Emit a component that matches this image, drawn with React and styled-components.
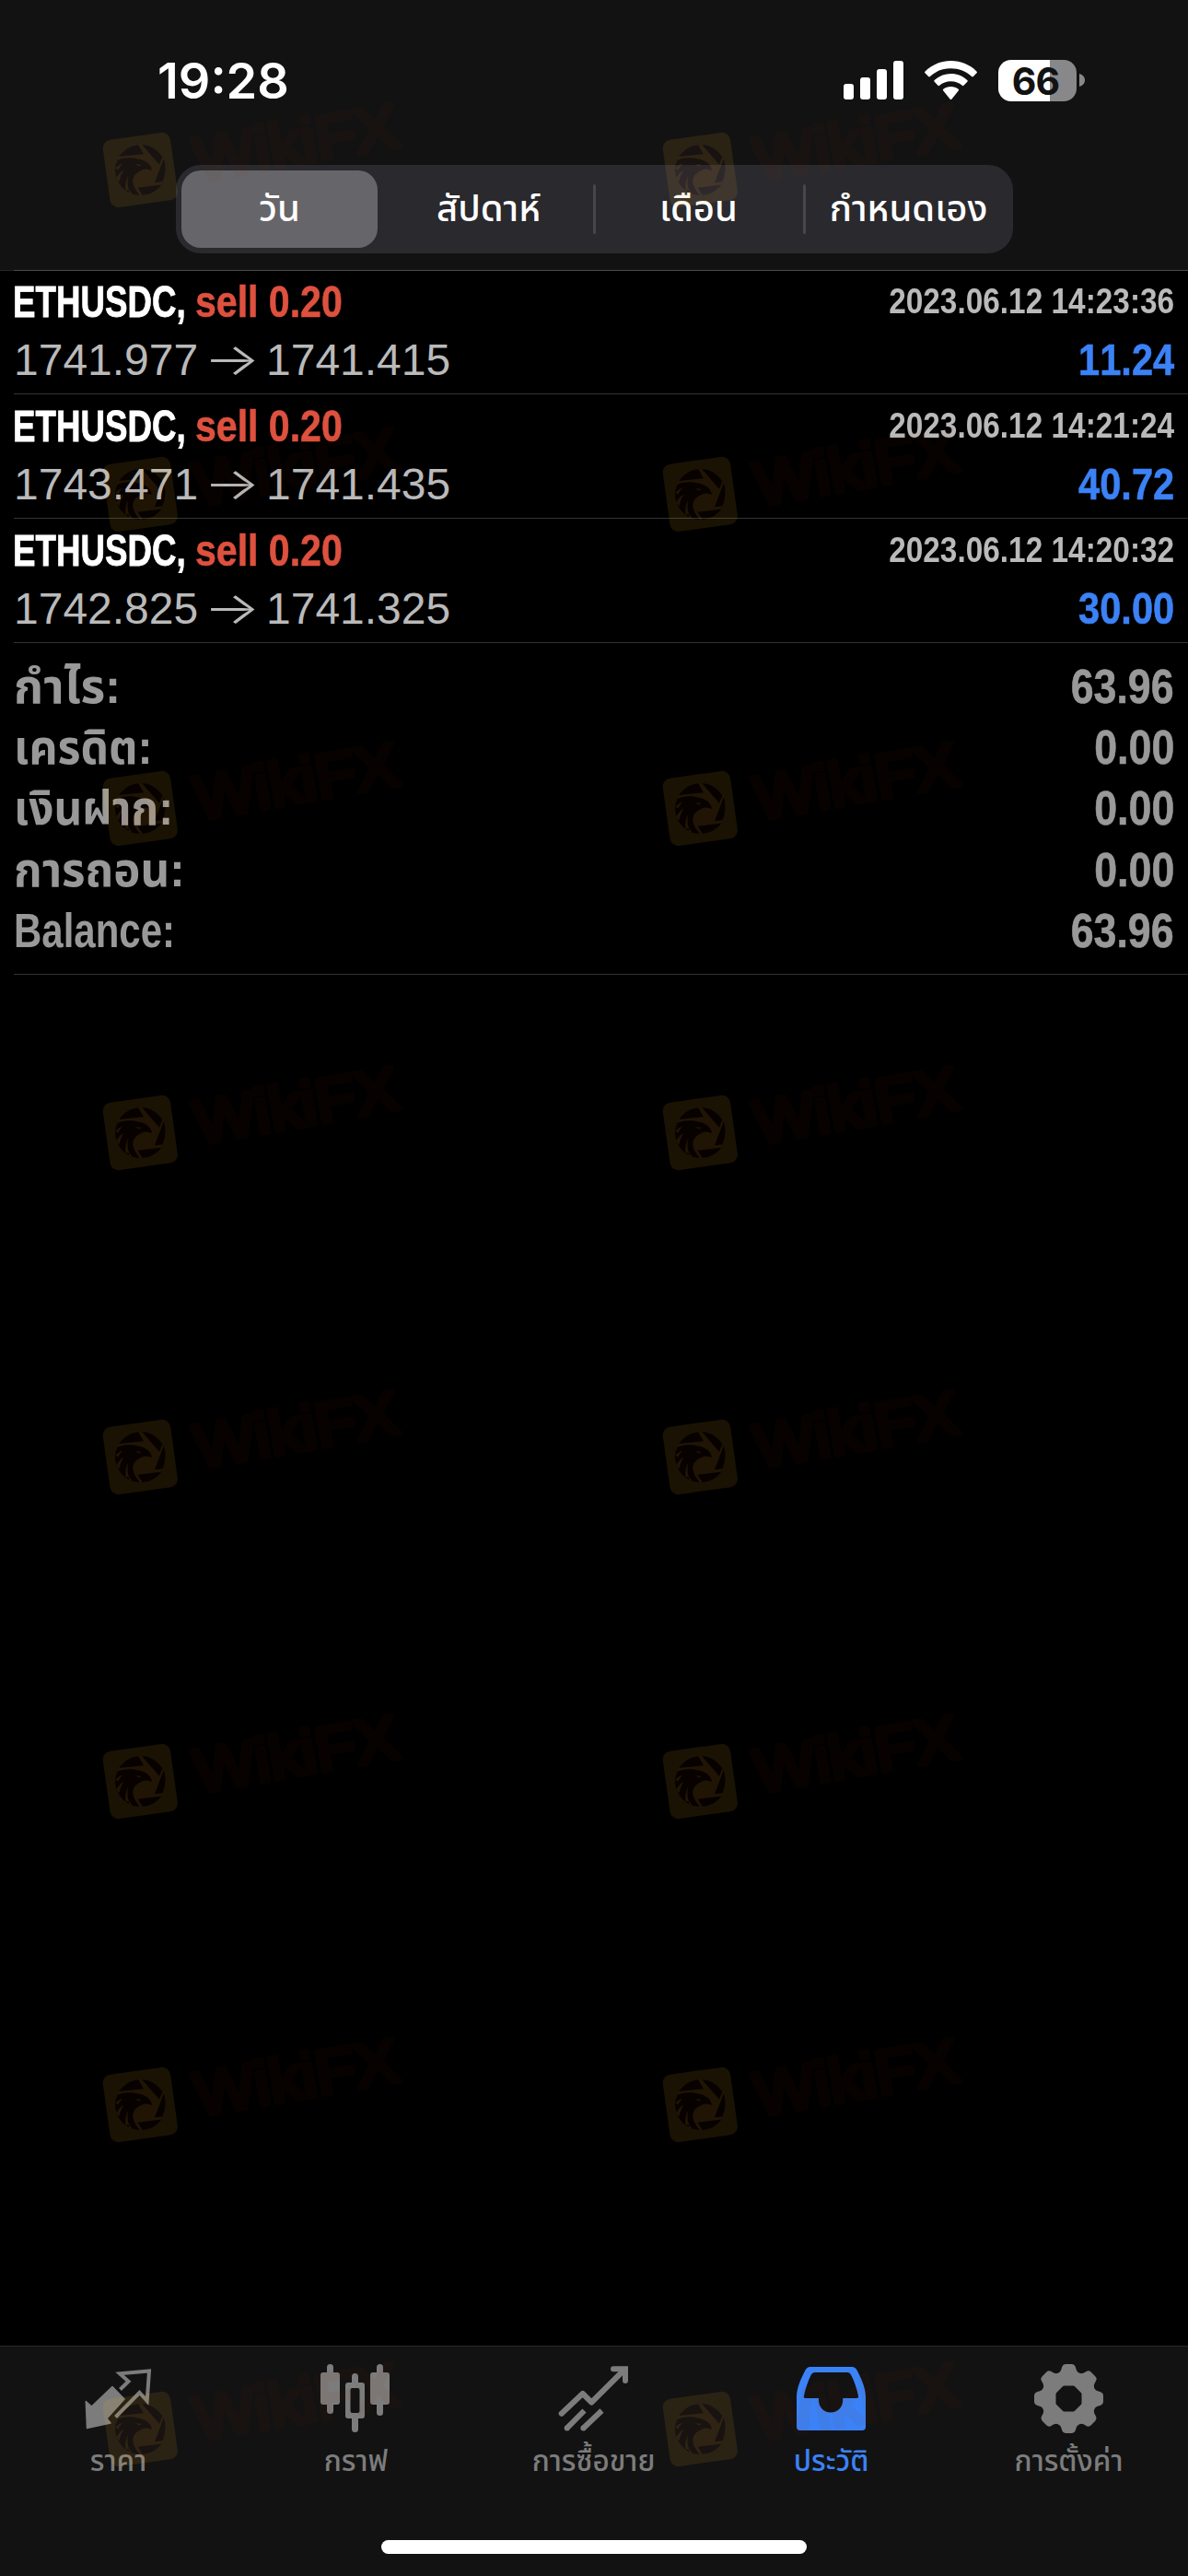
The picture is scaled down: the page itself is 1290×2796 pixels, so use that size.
import { useId } from "react";
import styled, { createGlobalStyle, css } from "styled-components";

const trades = [
  { id: 1, open: "1741.977", close: "1741.415", time: "2023.06.12 14:23:36", profit: "11.24" },
  { id: 2, open: "1743.471", close: "1741.435", time: "2023.06.12 14:21:24", profit: "40.72" },
  { id: 3, open: "1742.825", close: "1741.325", time: "2023.06.12 14:20:32", profit: "30.00" },
];

const summary = [
  { label: "กำไร:", value: "63.96", scale: 1.01 },
  { label: "เครดิต:", value: "0.00", scale: 0.945 },
  { label: "เงินฝาก:", value: "0.00", scale: 0.935 },
  { label: "การถอน:", value: "0.00", scale: 0.965 },
  { label: "Balance:", value: "63.96", scale: 0.823 },
];

const periods = ["วัน", "สัปดาห์", "เดือน", "กำหนดเอง"];

const tabs = [
  { label: "ราคา", Icon: QuotesIcon },
  { label: "กราฟ", Icon: ChartIcon },
  { label: "การซื้อขาย", Icon: TradeIcon },
  { label: "ประวัติ", Icon: HistoryIcon, active: true },
  { label: "การตั้งค่า", Icon: SettingsIcon },
];

const watermarkTops = [134, 486, 827, 1179, 1531, 1883, 2234, 2586];
const watermarkLefts = [105, 713];

export default function App() {
  return (
    <>
      <GlobalStyle />
      <Screen>
        <Header>
          <StatusBar />
          <Segments>
            {periods.map((period, index) => (
              <Segment key={period} $selected={index === 0} $divided={index > 1}>
                {period}
              </Segment>
            ))}
          </Segments>
        </Header>
        <History>
          {trades.map((trade) => (
            <Trade key={trade.id} {...trade} />
          ))}
          <Summary>
            {summary.map(({ label, value, scale }) => (
              <SummaryRow key={label}>
                <Squeezed $scale={scale}>{label}</Squeezed>
                <Amount $scale={0.877} $right>
                  {value}
                </Amount>
              </SummaryRow>
            ))}
          </Summary>
        </History>
        <TabBar>
          {tabs.map(({ label, Icon, active }) => (
            <Tab key={label} type="button" $active={active}>
              <Icon />
              <TabLabel>{label}</TabLabel>
            </Tab>
          ))}
        </TabBar>
        <HomeArea>
          <HomeIndicator />
        </HomeArea>
        {watermarkTops.map((top) =>
          watermarkLefts.map((left) => (
            <Watermark key={`${left}-${top}`} $top={top} $left={left} />
          ))
        )}
      </Screen>
    </>
  );
}

function StatusBar() {
  return (
    <StyledStatusBar>
      <Clock>19:28</Clock>
      <StatusIcons>
        <svg width="65" height="42" viewBox="0 0 65 42" fill="#fff">
          <rect x="0" y="25" width="11" height="17" rx="3" />
          <rect x="18" y="18" width="11" height="24" rx="3" />
          <rect x="36" y="9" width="11" height="33" rx="3" />
          <rect x="54" y="0" width="11" height="42" rx="3" />
        </svg>
        <svg width="57" height="42" viewBox="0 0 57 42" fill="#fff">
          <path d="M28.5 0C17.6 0 7.6 4.2 0.6 11.4C-0.1 12.1-0.1 12.7 0.5 13.3L4.1 17C4.7 17.6 5.3 17.6 5.9 17C11.9 11.3 19.8 8.3 28.5 8.3C37.2 8.3 45.1 11.3 51.1 17C51.7 17.6 52.3 17.6 52.9 17L56.5 13.3C57.1 12.7 57.1 12.1 56.4 11.4C49.4 4.2 39.4 0 28.5 0Z" />
          <path d="M28.5 14C21.7 14 15.4 16.6 10.7 21C10.1 21.6 10.1 22.2 10.7 22.8L14.5 26.7C15.1 27.3 15.6 27.3 16.2 26.7C19.5 23.7 23.8 22.2 28.5 22.2C33.2 22.2 37.5 23.7 40.8 26.7C41.4 27.3 41.9 27.3 42.5 26.7L46.3 22.8C46.9 22.2 46.9 21.6 46.3 21C41.6 16.6 35.3 14 28.5 14Z" />
          <path d="M28.5 28C25.4 28 22.6 29 20.3 30.8C19.7 31.3 19.7 31.9 20.3 32.5L27.5 41.4C28.2 42.1 28.8 42.1 29.5 41.4L36.7 32.5C37.3 31.9 37.3 31.3 36.7 30.8C34.4 29 31.6 28 28.5 28Z" />
        </svg>
        <BatteryWrapper>
          <Battery>66</Battery>
          <svg width="6" height="14" viewBox="0 0 6 14">
            <path d="M0 0C3.5 1 6 3.5 6 7S3.5 13 0 14Z" fill="#88888a" />
          </svg>
        </BatteryWrapper>
      </StatusIcons>
    </StyledStatusBar>
  );
}

function Trade({ open, close, time, profit }) {
  return (
    <TradeRow>
      <TradeLine>
        <Title>
          <Symbol $scale={0.765}>ETHUSDC,</Symbol>
          <Side $scale={0.855}>sell 0.20</Side>
        </Title>
        <Time $scale={0.856} $right>
          {time}
        </Time>
      </TradeLine>
      <TradeLine>
        <Prices>
          {open}
          <Arrow>→</Arrow>
          {close}
        </Prices>
        <Profit $scale={0.866} $right>
          {profit}
        </Profit>
      </TradeLine>
    </TradeRow>
  );
}

function QuotesIcon() {
  return (
    <TabIcon viewBox="0 0 90 80">
      <path
        d="M9.3 41.5L15.5 47L38 25.5L51 39L32 60L36 65L10.5 70.5Z"
        fill="currentColor"
        stroke="currentColor"
        strokeWidth="1.5"
        strokeLinejoin="round"
      />
      <path
        d="M46.5 28.5L55.5 19.8L46 11.3L78 8.4L75.7 41L67.5 32L41.5 58.5"
        fill="none"
        stroke="currentColor"
        strokeWidth="4"
      />
    </TabIcon>
  );
}

function ChartIcon() {
  return (
    <TabIcon viewBox="1 0 90 80" fill="currentColor">
      <rect x="14" y="1" width="7" height="54" rx="3.5" />
      <rect x="7" y="10" width="21" height="35" rx="3" />
      <path
        d="M41 21V14.5a3.5 3.5 0 0 1 7 0V21h4a3 3 0 0 1 3 3V57a3 3 0 0 1-3 3h-4V71.5a3.5 3.5 0 0 1-7 0V60h-4a3 3 0 0 1-3-3V24a3 3 0 0 1 3-3ZM39.5 29V52a2 2 0 0 0 2 2h6a2 2 0 0 0 2-2V29a2 2 0 0 0-2-2h-6a2 2 0 0 0-2 2Z"
        fillRule="evenodd"
      />
      <rect x="68" y="1" width="7" height="56" rx="3.5" />
      <rect x="61" y="10" width="21" height="35" rx="3" />
    </TabIcon>
  );
}

function TradeIcon() {
  return (
    <TabIcon viewBox="0 0 90 80" fill="none" stroke="currentColor" strokeWidth="6">
      <path d="M9.7 54.7L32.7 33L42.3 42.5L77 8" strokeLinecap="round" strokeLinejoin="round" />
      <path d="M66 6.2H79V19" strokeLinecap="round" />
      <path d="M15 71.2L34.5 51.5M32.7 71.2L53.5 51.5" />
      <path d="M15.7 70.5h.01M33.4 70.5h.01" strokeLinecap="round" />
    </TabIcon>
  );
}

function HistoryIcon() {
  return (
    <TabIcon viewBox="0.5 0 90 80" fill="currentColor">
      <path
        d="M22 4H68Q71 4 73 7.5C79 19 82.5 28 82.5 37V69Q82.5 73 78.5 73H11.5Q7.5 73 7.5 69V37C7.5 28 11 19 17 7.5Q19 4 22 4ZM27 10Q24.5 10 23.3 12.5C20 19 17 28 15.3 36Q15 38 17 38H31.5V40C31.5 48 37 53.5 44.5 53.5S57.7 48 57.7 40V38H72.7Q75 38 74.6 36C73 28 70 19 66.5 12.5Q65.3 10 63 10Z"
        fillRule="evenodd"
      />
    </TabIcon>
  );
}

function SettingsIcon() {
  const tooth =
    "M-14 -27Q-9.5 -27.5 -8.2 -31.5L-7.2 -34.7Q-6.2 -37.5 -3.5 -37.5H3.5Q6.2 -37.5 7.2 -34.7L8.2 -31.5Q9.5 -27.5 14 -27L8 -14H-8Z";
  return (
    <TabIcon viewBox="0 0 90 80">
      <g transform="translate(44.5 38.5)" fill="currentColor">
        {[0, 45, 90, 135, 180, 225, 270, 315].map((angle) => (
          <path key={angle} d={tooth} transform={`rotate(${angle})`} />
        ))}
        <circle r="22.5" fill="none" stroke="currentColor" strokeWidth="14" />
      </g>
    </TabIcon>
  );
}

function Watermark({ $top, $left }) {
  const maskId = useId();
  return (
    <StyledWatermark $top={$top} $left={$left} viewBox="0 0 340 110">
      <mask id={maskId} maskUnits="userSpaceOnUse" x="-50" y="-50" width="100" height="100">
        <rect x="-50" y="-50" width="100" height="100" fill="#fff" />
        {/* aperture blades around the eagle's head */}
        <path d="M-23-14.5C-18-22-10-27-2-27L3.7-17.3Z" />
        <path d="M2-27.3C11-27 19-22 24-14L20.7-5.7Z" />
        <path d="M25.3-12C28-6 28 5 24 12.7L15.7 13.7Z" />
        <path d="M23 16C17 24 9 27 2.3 27.3L-2.7 19.3Z" />
        <path d="M-24.7-10.7C-17-14-8-13.5-3.7-12.3C3-11.5 11.5-8 12.7 .5Q9-1.5 5-1C-2 1-8 5-8 12C-8 18-4 23-.5 27.3Q-5 27.3-9 26L-12 21L-12 24.5C-18 22-27 13-27.3 0Q-27.3-6-24.7-10.7Z" />
        <path
          d="M-5.5-6.5L1.5-5.5L-1.5-4ZM-27-2Q-23-6-19-7Q-23-3-24 0ZM-26 9Q-23 3-18 0Q-22 7-23 13ZM-16 22Q-17 13-13 6Q-15 15-12 22Z"
          fill="#fff"
        />
      </mask>
      <g transform="translate(47.3 50.5)">
        <circle r="27.5" fill="#8a3008" opacity="0.05" />
        <g mask={`url(#${maskId})`}>
          <rect
            x="-37"
            y="-37"
            width="74"
            height="74"
            rx="9"
            transform="rotate(-8)"
            fill="#ffb928"
            opacity="0.1"
          />
        </g>
      </g>
      <WatermarkName
        x="0"
        y="0"
        textLength="224"
        lengthAdjust="spacingAndGlyphs"
        transform="translate(110 63) rotate(-9.9)"
      >
        WikiFX
      </WatermarkName>
    </StyledWatermark>
  );
}

const GlobalStyle = createGlobalStyle`
  body {
    margin: 0;
    background-color: #000;
  }
  * {
    box-sizing: border-box;
  }
`;

const Screen = styled.div`
  position: relative;
  display: flex;
  flex-direction: column;
  width: 1290px;
  height: 2796px;
  overflow: hidden;
  background-color: #000;
  color: #fff;
  font-family: "Liberation Sans", "Noto Sans Thai", "Noto Sans", sans-serif;
`;

const Header = styled.header`
  height: 294px;
  background-color: #121212;
  border-bottom: 1px solid #262626;
`;

const StyledStatusBar = styled.div`
  display: flex;
  justify-content: space-between;
  align-items: center;
  height: 179px;
  padding: 0 112px 5px 171px;
`;

const Clock = styled.span`
  font-family: "Inter", sans-serif;
  font-size: 54px;
  font-weight: 600;
`;

const StatusIcons = styled.div`
  display: flex;
  align-items: center;
  gap: 23px;
`;

const BatteryWrapper = styled.div`
  display: flex;
  align-items: center;
  gap: 3px;
`;

const Battery = styled.div`
  width: 85px;
  height: 45px;
  padding-right: 4px;
  border-radius: 14px;
  background: linear-gradient(to right, #fff 66%, #88888a 66%);
  color: #121212;
  font-family: "Inter", sans-serif;
  font-size: 41px;
  font-weight: 700;
  line-height: 46px;
  letter-spacing: -1px;
  text-align: center;
`;

const Segments = styled.nav`
  display: grid;
  grid-template-columns: 213px repeat(3, 228px);
  width: 909px;
  height: 96px;
  margin-left: 191px;
  padding: 6px;
  border-radius: 27px;
  background-color: #2a292e;
`;

const Segment = styled.button`
  position: relative;
  height: 84px;
  padding: 0 0 0 ${({ $selected }) => ($selected ? "0" : "13px")};
  border: none;
  border-radius: 21px;
  background-color: ${({ $selected }) => ($selected ? "#66656a" : "transparent")};
  color: #fff;
  font: 500 40px/87px "Noto Sans Thai", "Liberation Sans", sans-serif;
  white-space: nowrap;
  ${({ $divided }) =>
    $divided &&
    css`
      &::before {
        content: "";
        position: absolute;
        top: 15px;
        left: 6px;
        width: 3px;
        height: 54px;
        border-radius: 2px;
        background-color: #47464b;
      }
    `}
`;

const History = styled.main`
  flex: 1;
  margin: -1px 0 0 15px;
  border-top: 1px solid #4a4a4a;
  font-kerning: none;
`;

const TradeRow = styled.article`
  height: 134px;
  padding-right: 15px;
  border-bottom: 1px solid #333;
  &:not(:first-child) {
    height: 135px;
    padding-top: 1px;
  }
`;

const TradeLine = styled.div`
  display: flex;
  justify-content: space-between;
  height: 63px;
  font-size: 48px;
  line-height: 67px;
`;

const Squeezed = styled.span`
  transform: scaleX(${({ $scale }) => $scale});
  transform-origin: ${({ $right }) => ($right ? "right" : "left")} center;
  white-space: nowrap;
`;

const Title = styled.div`
  display: flex;
  margin-left: -1px;
  font-weight: 700;
`;

const Symbol = styled(Squeezed)`
  -webkit-text-stroke: 0.8px;
`;

/* pulled back over the room the squeezed symbol leaves free */
const Side = styled(Squeezed)`
  margin-left: -47px;
  color: #de513f;
  -webkit-text-stroke: 0.6px;
`;

const Time = styled(Squeezed)`
  color: #bababa;
  font-size: 39px;
  font-weight: 700;
  line-height: 65px;
`;

const Prices = styled.span`
  color: #bababa;
`;

const Arrow = styled.span`
  display: inline-block;
  margin: 0 14px;
  font-family: "Inter", sans-serif;
  font-weight: 300;
  line-height: 1;
  transform: scaleX(1.35);
`;

const Profit = styled(Squeezed)`
  color: #3b82f7;
  font-weight: 700;
  -webkit-text-stroke: 0.6px;
`;

const Summary = styled.section`
  height: 360px;
  padding: 15px 15px 0 0;
  border-bottom: 1px solid #333;
`;

const SummaryRow = styled.div`
  display: flex;
  justify-content: space-between;
  height: 66.2px;
  color: #999;
  font-size: 51px;
  font-weight: 700;
  line-height: 66px;
`;

const Amount = styled(Squeezed)`
  -webkit-text-stroke: 0.6px;
`;

const TabBar = styled.nav`
  display: grid;
  grid-template-columns: repeat(5, 1fr);
  height: 160px;
  padding-top: 18px;
  background-color: #121212;
  border-top: 1px solid #2a2a2a;
`;

const Tab = styled.button`
  display: flex;
  flex-direction: column;
  align-items: center;
  padding: 0;
  border: none;
  background-color: transparent;
  color: ${({ $active }) => ($active ? "#3b82f7" : "#7c7c7c")};
`;

const TabIcon = styled.svg`
  width: 90px;
  height: 80px;
`;

const TabLabel = styled.span`
  margin: 7px 1px 0 0;
  font: 500 31.5px/42px "Noto Sans Thai", "Liberation Sans", sans-serif;
  white-space: nowrap;
`;

const HomeArea = styled.footer`
  height: 90px;
  padding-top: 51px;
  background-color: #121212;
`;

const HomeIndicator = styled.div`
  width: 462px;
  height: 15px;
  margin: 0 auto;
  border-radius: 8px;
  background-color: #fff;
`;

const StyledWatermark = styled.svg`
  position: absolute;
  top: ${({ $top }) => $top}px;
  left: ${({ $left }) => $left}px;
  width: 340px;
  height: 110px;
  overflow: visible;
  pointer-events: none;
`;

const WatermarkName = styled.text`
  fill: #8a3008;
  stroke: #8a3008;
  stroke-width: 6px;
  stroke-linejoin: round;
  opacity: 0.05;
  font-family: "Liberation Sans", sans-serif;
  font-size: 67px;
`;
